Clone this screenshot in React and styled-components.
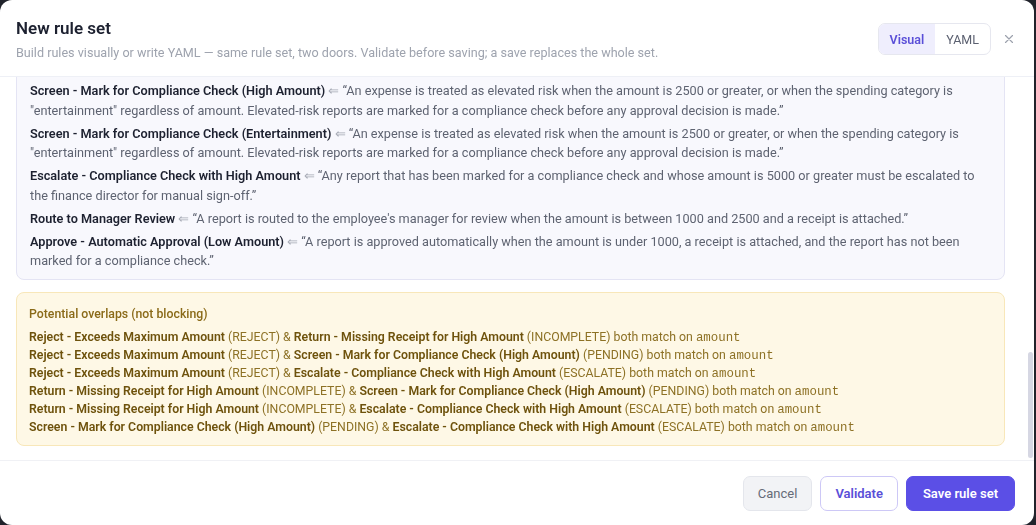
import { useLayoutEffect, useRef } from "react";
import styled, { createGlobalStyle } from "styled-components";

const GlobalStyle = createGlobalStyle`
  * { box-sizing: border-box; }
  html, body { margin: 0; height: 100%; }
  body {
    font-family: Roboto, "Noto Sans", Arial, sans-serif;
    background: #3b3d44;
  }
  #root { height: 100%; }
`;

const Overlay = styled.div`
  position: fixed;
  inset: 0;
  display: flex;
  padding: 0 2px 0 0;
  background: rgba(17, 19, 26, 0.6);
`;

const Modal = styled.div`
  position: relative;
  flex: 1;
  display: flex;
  flex-direction: column;
  background: #fff;
  border-radius: 12px;
  overflow: hidden;
`;

const Header = styled.header`
  display: flex;
  align-items: center;
  justify-content: space-between;
  padding: 17px 18px 15px 16px;
  border-bottom: 1px solid #eef0f6;
`;

const Title = styled.h2`
  margin: 0;
  font-size: 17px;
  line-height: 22px;
  font-weight: 600;
  color: #1d2130;
`;

const Subtitle = styled.p`
  margin: 5px 0 0;
  font-size: 12.6px;
  line-height: 17px;
  color: #9ea3ae;
`;

const HeaderActions = styled.div`
  display: flex;
  align-items: center;
  gap: 11px;
`;

const Toggle = styled.div`
  display: flex;
  border: 1px solid #e6e7ef;
  border-radius: 7px;
  overflow: hidden;
`;

const ToggleOption = styled.button`
  border: 0;
  padding: 8px 11px 7px;
  font: inherit;
  font-size: 12.5px;
  font-weight: ${(p) => (p.$active ? 600 : 400)};
  color: ${(p) => (p.$active ? "#5a4fd8" : "#5b6070")};
  background: ${(p) => (p.$active ? "#efeefd" : "transparent")};
`;

const CloseButton = styled.button`
  display: flex;
  border: 0;
  padding: 0;
  background: none;
  color: #9ca1ad;
`;

const Body = styled.div`
  flex: 1;
  overflow-y: auto;
  padding: 14px 29px 14px 16px;
  scrollbar-width: none;

  &::-webkit-scrollbar { display: none; }
`;

/* drawn thumb, sits over the right edge of the scrolling body */
const ScrollThumb = styled.div`
  position: absolute;
  right: 1px;
  top: 352px;
  width: 5px;
  height: 106px;
  border-radius: 3px;
  background: #d6d7e3;
`;

const SectionLabel = styled.div`
  margin: 0 0 8px;
  font-size: 11px;
  font-weight: 600;
  letter-spacing: 0.5px;
  text-transform: uppercase;
  color: #8a8fa0;
`;

const CardList = styled.div`
  display: flex;
  flex-direction: column;
  gap: 10px;
  margin-bottom: 18px;
`;

const RuleCard = styled.div`
  border: 1px solid #e6e7ef;
  border-radius: 8px;
  padding: 12px 14px;
`;

const CardTop = styled.div`
  display: flex;
  align-items: center;
  justify-content: space-between;
  margin-bottom: 10px;
  font-size: 13px;
  font-weight: 600;
  color: #1d2130;
`;

const Outcome = styled.span`
  padding: 2px 8px;
  border-radius: 10px;
  font-size: 11px;
  font-weight: 600;
  color: #5a4fd8;
  background: #efeefd;
`;

const Conditions = styled.div`
  display: flex;
  flex-wrap: wrap;
  gap: 6px;
`;

const Condition = styled.code`
  padding: 4px 8px;
  border-radius: 5px;
  background: #f4f5f8;
  font-family: "Liberation Mono", "DejaVu Sans Mono", monospace;
  font-size: 12px;
  color: #4b5060;
`;

const SourcePanel = styled.div`
  display: flex;
  flex-direction: column;
  gap: 3.5px;
  padding: 10px 12px 8px 13px;
  background: #f8f8fd;
  border: 1px solid #e4e4f4;
  border-radius: 8px;
`;

const SourceRow = styled.p`
  margin: 0;
  font-size: 12.7px;
  line-height: 19.5px;
  color: #5e6371;

  b {
    font-weight: 600;
    color: #1d2130;
  }
`;

const Arrow = styled.span`
  color: #a7abb6;
`;

const OverlapBox = styled.div`
  margin-top: 12px;
  padding: 12px 12px 9px;
  background: #fef8e6;
  border: 1px solid #f8e7b9;
  border-radius: 8px;
  font-size: 12.3px;
  line-height: 18px;
  color: #8d7125;
`;

const OverlapTitle = styled.div`
  margin-bottom: 5px;
  font-weight: 500;
  color: #8a6a18;
`;

const OverlapRow = styled.div`
  height: 18px;
  white-space: nowrap;

  b {
    font-weight: 600;
    color: #6e520c;
  }
`;

const Mono = styled.code`
  font-family: "Liberation Mono", "DejaVu Sans Mono", monospace;
  font-size: 12.4px;
  line-height: 1;
`;

const Footer = styled.footer`
  display: flex;
  justify-content: flex-end;
  gap: 8px;
  padding: 15px 19px 14px;
  border-top: 1px solid #f0f1f5;
`;

const Button = styled.button`
  height: 35px;
  padding: 0 ${(p) => (p.$variant === "primary" ? 16 : 14)}px;
  border-radius: 7px;
  font: inherit;
  font-size: 13px;
  font-weight: ${(p) => (p.$variant === "ghost" ? 400 : 600)};
  border: 1px solid
    ${(p) =>
      p.$variant === "primary" ? "#5b4fe6" : p.$variant === "outline" ? "#cdc8f6" : "#e4e6ec"};
  color: ${(p) =>
    p.$variant === "primary" ? "#fff" : p.$variant === "outline" ? "#5a4fd8" : "#666b78"};
  background: ${(p) =>
    p.$variant === "primary" ? "#5b4fe6" : p.$variant === "outline" ? "#fff" : "#f2f3f6"};
`;

const rules = [
  {
    name: "Reject - Exceeds Maximum Amount",
    outcome: "REJECT",
    when: ["amount ≥ 10000"],
    source: "Any expense whose amount is 10000 or greater is rejected outright.",
  },
  {
    name: "Return - Missing Receipt for High Amount",
    outcome: "INCOMPLETE",
    when: ["amount ≥ 75", "receipt_attached = false"],
    source:
      "A report with an amount of 75 or greater that has no receipt attached is returned to the employee as incomplete.",
  },
  {
    name: "Screen - Mark for Compliance Check (High Amount)",
    outcome: "PENDING",
    when: ["amount ≥ 2500"],
    source:
      "An expense is treated as elevated risk when the amount is 2500 or greater, or when the spending category is \"entertainment\" regardless of amount. Elevated-risk reports are marked for a compliance check before any approval decision is made.",
  },
  {
    name: "Screen - Mark for Compliance Check (Entertainment)",
    outcome: "PENDING",
    when: ["category = \"entertainment\""],
    source:
      "An expense is treated as elevated risk when the amount is 2500 or greater, or when the spending category is \"entertainment\" regardless of amount. Elevated-risk reports are marked for a compliance check before any approval decision is made.",
  },
  {
    name: "Escalate - Compliance Check with High Amount",
    outcome: "ESCALATE",
    when: ["compliance_check = true", "amount ≥ 5000"],
    source:
      "Any report that has been marked for a compliance check and whose amount is 5000 or greater must be escalated to the finance director for manual sign-off.",
  },
  {
    name: "Route to Manager Review",
    outcome: "REVIEW",
    when: ["amount ≥ 1000", "amount < 2500", "receipt_attached = true"],
    source:
      "A report is routed to the employee's manager for review when the amount is between 1000 and 2500 and a receipt is attached.",
  },
  {
    name: "Approve - Automatic Approval (Low Amount)",
    outcome: "APPROVE",
    when: ["amount < 1000", "receipt_attached = true", "compliance_check = false"],
    source:
      "A report is approved automatically when the amount is under 1000, a receipt is attached, and the report has not been marked for a compliance check.",
  },
];

const overlaps = [
  [0, 1],
  [0, 2],
  [0, 4],
  [1, 2],
  [1, 4],
  [2, 4],
];

function XIcon() {
  return (
    <svg width="14" height="14" viewBox="0 0 24 24" fill="none" stroke="currentColor" strokeWidth="2" strokeLinecap="round">
      <path d="M18 6 6 18M6 6l12 12" />
    </svg>
  );
}

export default function App() {
  const bodyRef = useRef(null);

  // the builder opens scrolled to the validation summary
  useLayoutEffect(() => {
    const el = bodyRef.current;
    if (el) el.scrollTop = el.scrollHeight;
  }, []);

  return (
    <>
      <GlobalStyle />
      <Overlay>
        <Modal role="dialog">
          <Header>
            <div>
              <Title>New rule set</Title>
              <Subtitle>
                Build rules visually or write YAML — same rule set, two doors. Validate before
                saving; a save replaces the whole set.
              </Subtitle>
            </div>
            <HeaderActions>
              <Toggle>
                <ToggleOption $active>Visual</ToggleOption>
                <ToggleOption>YAML</ToggleOption>
              </Toggle>
              <CloseButton aria-label="Close">
                <XIcon />
              </CloseButton>
            </HeaderActions>
          </Header>

          <Body ref={bodyRef}>
            <SectionLabel>Rules</SectionLabel>
            <CardList>
              {rules.map((rule) => (
                <RuleCard key={rule.name}>
                  <CardTop>
                    {rule.name}
                    <Outcome>{rule.outcome}</Outcome>
                  </CardTop>
                  <Conditions>
                    {rule.when.map((c) => (
                      <Condition key={c}>{c}</Condition>
                    ))}
                  </Conditions>
                </RuleCard>
              ))}
            </CardList>

            <SectionLabel>Source sentences</SectionLabel>
            <SourcePanel>
              {rules.map((rule) => (
                <SourceRow key={rule.name}>
                  <b>{rule.name}</b> <Arrow>⇐</Arrow> “{rule.source}”
                </SourceRow>
              ))}
            </SourcePanel>

            <OverlapBox>
              <OverlapTitle>Potential overlaps (not blocking)</OverlapTitle>
              {overlaps.map(([a, b]) => (
                <OverlapRow key={`${a}-${b}`}>
                  <b>{rules[a].name}</b> ({rules[a].outcome}) &amp; <b>{rules[b].name}</b> (
                  {rules[b].outcome}) both match on <Mono>amount</Mono>
                </OverlapRow>
              ))}
            </OverlapBox>
          </Body>
          <ScrollThumb />

          <Footer>
            <Button $variant="ghost">Cancel</Button>
            <Button $variant="outline">Validate</Button>
            <Button $variant="primary">Save rule set</Button>
          </Footer>
        </Modal>
      </Overlay>
    </>
  );
}
